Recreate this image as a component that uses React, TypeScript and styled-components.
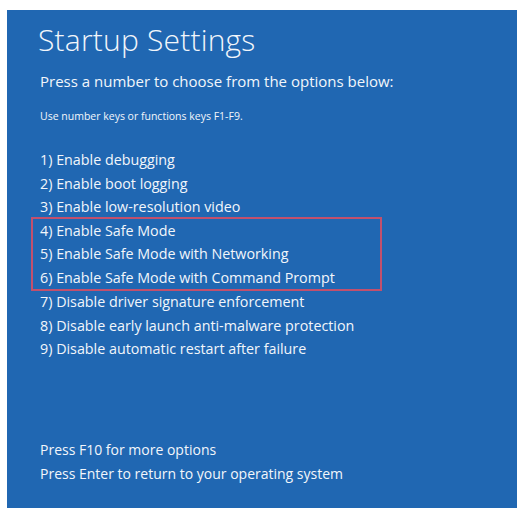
import styled, { createGlobalStyle } from "styled-components"

const GlobalStyle = createGlobalStyle`
    html, body {
        margin: 0;
        padding: 0;
        background: #ffffff;
    }
    * {
        box-sizing: border-box;
    }
`

type OptionType = {
    num: number
    label: string
}

const options: OptionType[] = [
    { num: 1, label: "Enable debugging" },
    { num: 2, label: "Enable boot logging" },
    { num: 3, label: "Enable low-resolution video" },
    { num: 4, label: "Enable Safe Mode" },
    { num: 5, label: "Enable Safe Mode with Networking" },
    { num: 6, label: "Enable Safe Mode with Command Prompt" },
    { num: 7, label: "Disable driver signature enforcement" },
    { num: 8, label: "Disable early launch anti-malware protection" },
    { num: 9, label: "Disable automatic restart after failure" },
]

const Option = (props: OptionType) => (
    <StyledOption>{props.num}) {props.label}</StyledOption>
)

export default function App() {
    const before = options.slice(0, 3)
    const marked = options.slice(3, 6)
    const after = options.slice(6)

    return (
        <>
            <GlobalStyle />
            <StyledScreen>
                <StyledTitle>Startup Settings</StyledTitle>
                <StyledLead>Press a number to choose from the options below:</StyledLead>
                <StyledHint>Use number keys or functions keys F1-F9.</StyledHint>
                <StyledList>
                    {before.map(o => <Option key={o.num} {...o} />)}
                    <StyledMarked>
                        {marked.map(o => <Option key={o.num} {...o} />)}
                    </StyledMarked>
                    {after.map(o => <Option key={o.num} {...o} />)}
                </StyledList>
                <StyledFooter>
                    <StyledFooterLine>Press F10 for more options</StyledFooterLine>
                    <StyledFooterLine>Press Enter to return to your operating system</StyledFooterLine>
                </StyledFooter>
            </StyledScreen>
        </>
    )
}

const StyledScreen = styled.div`
    width: 510px;
    height: 498px;
    margin: 10px 0 0 7px;
    padding: 8px 0 23px 31px;
    background: #2067b2;
    color: #f2f6fb;
    font-family: "Open Sans", "Noto Sans", sans-serif;
    display: flex;
    flex-direction: column;
`

const StyledTitle = styled.h1`
    margin: 0;
    font-weight: 300;
    font-size: 30px;
    line-height: 44px;
    letter-spacing: 0.2px;
`

const StyledLead = styled.p`
    margin: 8px 0 0 2px;
    font-weight: 400;
    font-size: 15px;
    line-height: 22px;
`

const StyledHint = styled.p`
    margin: 17px 0 0 2px;
    font-size: 10.5px;
    line-height: 14px;
`

const StyledList = styled.div`
    margin: 25px 0 0 0;
    display: flex;
    flex-direction: column;
`

const StyledOption = styled.div`
    padding-left: 2px;
    font-size: 14.3px;
    line-height: 23.5px;
    white-space: nowrap;
`

const StyledMarked = styled.div`
    width: 351px;
    margin: -2px 0 -1px -7px;
    padding: 0 0 0 5px;
    border: 2px solid #c2506d;
`

const StyledFooter = styled.div`
    margin-top: auto;
    display: flex;
    flex-direction: column;
`

const StyledFooterLine = styled.div`
    padding-left: 2px;
    font-size: 14px;
    line-height: 23.5px;
    white-space: nowrap;
`
